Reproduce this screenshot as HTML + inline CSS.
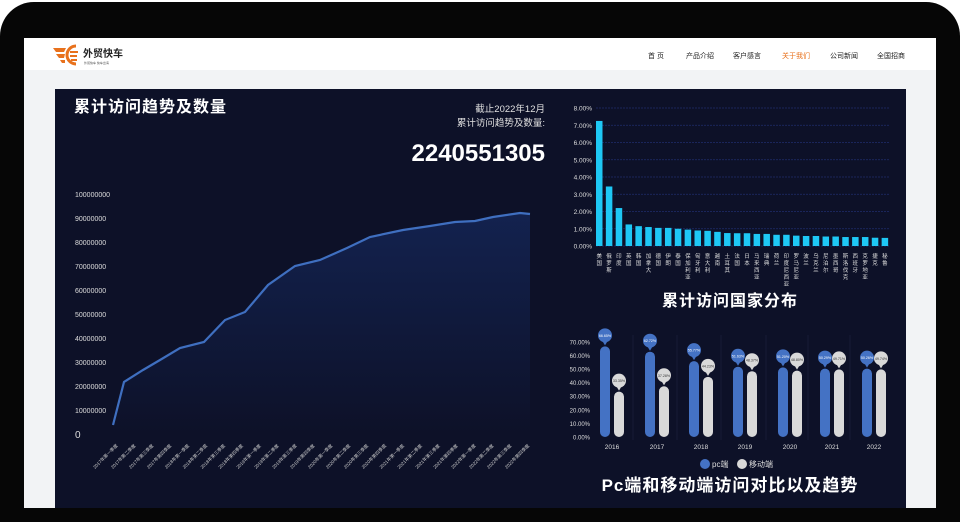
<!DOCTYPE html>
<html><head><meta charset="utf-8"><style>
*{margin:0;padding:0;box-sizing:border-box}
body{width:960px;height:500px;overflow:hidden;background:#fff;font-family:"Liberation Sans","Noto Sans CJK SC",sans-serif;position:relative}
.bezel{position:absolute;left:0;top:2px;width:960px;height:520px;background:#060606;border-radius:34px 34px 0 0}
.screen{position:absolute;left:24px;top:38px;width:912px;height:470px;background:#f2f3f5;overflow:hidden}
.hdr{position:absolute;left:0;top:0;width:912px;height:32px;background:#fff}
.nav{position:absolute;top:13px;font-size:7px;color:#222;white-space:nowrap}
.panel{position:absolute;left:31px;top:51px;width:851px;height:420px;background:#0d1128}
svg text{font-family:"Liberation Sans","Noto Sans CJK SC",sans-serif}
</style></head><body>
<div class="bezel"></div>
<div class="screen">
 <div class="hdr">
  <svg width="80" height="30" style="position:absolute;left:28px;top:4px">
   <path d="M1 6h13l-2 4H4z M4 12h9l-1 4H7z M8 18h5v3h-3z" fill="#e8711c"/>
   <path d="M24 4a9 9 0 1 0 0 18" stroke="#e8711c" stroke-width="3" fill="none"/>
   <path d="M18 10h8M18 14h7M19 18h6" stroke="#e8711c" stroke-width="2"/>
   <text x="31" y="15" font-size="10" font-weight="bold" fill="#222">外贸快车</text>
   <text x="32" y="22" font-size="3" fill="#555">外贸快车 快车出海</text>
  </svg>
  <span class="nav" style="left:624px">首 页</span>
  <span class="nav" style="left:662px">产品介绍</span>
  <span class="nav" style="left:709px">客户感言</span>
  <span class="nav" style="left:758px;color:#e8711c">关于我们</span>
  <span class="nav" style="left:806px">公司新闻</span>
  <span class="nav" style="left:853px">全国招商</span>
 </div>
 <div class="panel"></div>
</div>
<svg width="960" height="500" style="position:absolute;left:0;top:0">
 <defs><linearGradient id="g" x1="0" y1="0" x2="0" y2="1"><stop offset="0" stop-color="#13224f"/><stop offset="1" stop-color="#0d1128"/></linearGradient></defs>
 <text x="74" y="112" font-size="16" font-weight="bold" fill="#fff" letter-spacing="1">累计访问趋势及数量</text>
 <text x="545" y="112" font-size="9.5" fill="#e0e0e0" text-anchor="end">截止2022年12月</text>
 <text x="545" y="126" font-size="9.5" fill="#e0e0e0" text-anchor="end">累计访问趋势及数量:</text>
 <text x="545" y="161" font-size="24" font-weight="bold" fill="#fff" text-anchor="end">2240551305</text>
 <g font-size="7" fill="#ddd">
  <text x="75" y="197">100000000</text><text x="75" y="221">90000000</text><text x="75" y="245">80000000</text><text x="75" y="269">70000000</text><text x="75" y="293">60000000</text><text x="75" y="317">50000000</text><text x="75" y="341">40000000</text><text x="75" y="365">30000000</text><text x="75" y="389">20000000</text><text x="75" y="413">10000000</text><text x="75" y="438" font-size="10">0</text>
 </g>
 <path d="M113 425L124 382L143 370L160 360L180 348L204 342L225 320L245 312L268 285L295 266L320 260L347 248L370 237L403 230L430 226L455 222L475 221L493 217L520 213L530 214L530 434L113 434Z" fill="url(#g)"/>
 <path d="M113 425L124 382L143 370L160 360L180 348L204 342L225 320L245 312L268 285L295 266L320 260L347 248L370 237L403 230L430 226L455 222L475 221L493 217L520 213L530 214" fill="none" stroke="#3f6fc0" stroke-width="2.2"/>
 <g id="xl" font-size="4.5" fill="#ccc"></g>
 <g id="bars"></g>
 <text x="730" y="306" font-size="16" font-weight="bold" fill="#fff" text-anchor="middle" letter-spacing="1">累计访问国家分布</text>
 <g id="pc"></g>
 <circle cx="705" cy="464" r="5" fill="#4472c4"/><text x="712" y="467" font-size="8" fill="#ddd">pc端</text>
 <circle cx="742" cy="464" r="5" fill="#d9d9d9"/><text x="749" y="467" font-size="8" fill="#ddd">移动端</text>
 <text x="730" y="491" font-size="17" font-weight="bold" fill="#fff" text-anchor="middle" letter-spacing="1">Pc端和移动端访问对比以及趋势</text>
</svg>
<script>
var ns="http://www.w3.org/2000/svg";
function el(p,t,a,txt){var e=document.createElementNS(ns,t);for(var k in a)e.setAttribute(k,a[k]);if(txt)e.textContent=txt;p.appendChild(e);return e}
var xl=document.getElementById('xl');
var q=["第一季度","第二季度","第三季度","第四季度"];
for(var i=0;i<24;i++){var x=118+i*17.9,y=446;el(xl,'text',{x:x,y:y,transform:'rotate(-45 '+x+' '+y+')','text-anchor':'end'},(2017+Math.floor(i/4))+"年"+q[i%4]);}
var b=document.getElementById('bars');
for(var i=0;i<=8;i++){var y=246-i*17.25;el(b,'text',{x:592,y:y+2.5,'font-size':6.5,fill:'#ddd','text-anchor':'end'},i+".00%");el(b,'line',{x1:596,x2:890,y1:y,y2:y,stroke:'#1f2c6b','stroke-width':0.7,'stroke-dasharray':'2 1'});}
var v=[7.25,3.45,2.2,1.25,1.15,1.1,1.05,1.05,1.0,0.95,0.9,0.88,0.82,0.75,0.74,0.74,0.7,0.7,0.65,0.65,0.6,0.58,0.58,0.55,0.55,0.52,0.52,0.52,0.48,0.47];
var c="美国,俄罗斯,印度,英国,韩国,加拿大,德国,伊朗,泰国,保加利亚,匈牙利,意大利,越南,土耳其,法国,日本,马来西亚,瑞典,荷兰,印度尼西亚,罗马尼亚,波兰,乌克兰,尼泊尔,墨西哥,斯洛伐克,西班牙,克罗地亚,捷克,秘鲁".split(",");
for(var i=0;i<30;i++){var x=596+i*9.85,h=v[i]*17.25;el(b,'rect',{x:x,y:246-h,width:6.5,height:h,fill:'#1ec8f5'});
 for(var j=0;j<c[i].length;j++)el(b,'text',{x:x+3.2,y:258+j*7,'font-size':5.5,fill:'#ddd','text-anchor':'middle'},c[i][j]);}
var p=document.getElementById('pc');
for(var i=0;i<=7;i++){var y=437-i*13.6;el(p,'text',{x:590,y:y+2.5,'font-size':6,fill:'#ddd','text-anchor':'end'},(i*10)+".00%");}
var yrs=[[612,66.65],[657,62.72],[701,55.77],[745,51.63],[790,51.20],[832,50.29],[874,50.26]];
for(var i=0;i<7;i++){var gx=yrs[i][0],a=yrs[i][1],m=100-a;
 if(i>0)el(p,'line',{x1:gx-24,x2:gx-24,y1:335,y2:440,stroke:'#1d2340','stroke-width':0.6});
 [[gx-7,a,'#4472c4','#fff'],[gx+7,m,'#d9d9d9','#333']].forEach(function(d){var h=d[1]*1.36,t=437-h;
  el(p,'rect',{x:d[0]-5,y:t,width:10,height:h,rx:5,fill:d[2]});
  el(p,'path',{d:'M'+(d[0]-3)+' '+(t-6)+'L'+d[0]+' '+(t-1)+'L'+(d[0]+3)+' '+(t-6)+'Z',fill:d[2]});
  el(p,'circle',{cx:d[0],cy:t-11,r:7,fill:d[2]});
  el(p,'text',{x:d[0],y:t-9.5,'font-size':3.6,fill:d[3],'text-anchor':'middle'},d[1].toFixed(2)+"%");});
 el(p,'text',{x:gx,y:449,'font-size':6.5,fill:'#ddd','text-anchor':'middle'},2016+i);}
</script>
</body></html>
